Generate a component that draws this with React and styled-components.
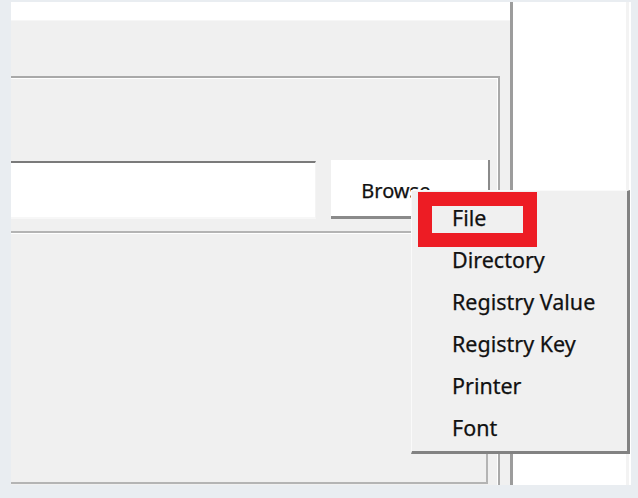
import React from 'react';
import styled, { createGlobalStyle } from 'styled-components';

const GlobalStyle = createGlobalStyle`
    html, body {
        margin: 0;
        padding: 0;
        background: #e9edf1;
    }
    body {
        font-family: "Noto Sans", "Open Sans", sans-serif;
    }
`;

const Page = styled.div`
    position: relative;
    width: 638px;
    height: 498px;
    box-sizing: border-box;
    padding: 2px 6px 13px 11px;
    background: #e9edf1;
    overflow: hidden;
`;

const Window = styled.div`
    display: flex;
    height: 100%;
`;

const LeftPane = styled.div`
    width: 499px;
    display: flex;
    flex-direction: column;
    background: #f0f0f0;
`;

const TopStrip = styled.div`
    height: 18px;
    background: #fff;
    border-bottom: 1px solid #f6f6f6;
`;

const Content = styled.div`
    flex: 1;
    display: flex;
    flex-direction: column;
    padding: 55px 10px 0 0;
`;

const GroupBox = styled.div`
    flex: 1;
    display: flex;
    flex-direction: column;
    border-top: 2px solid #a9a9a9;
    border-right: 2px solid #a9a9a9;
    box-shadow: inset 0 1px 0 #fff, inset -1px 0 0 #fff;
    padding: 83px 8px 0 0;
`;

const FieldRow = styled.div`
    display: flex;
    align-items: flex-start;
    gap: 15px;
`;

const TextInput = styled.div`
    width: 305px;
    height: 54px;
    background: #fff;
    border-top: 2px solid #7a7a7a;
    border-right: 1px solid #f4f4f4;
    border-bottom: 2px solid #f7f7f7;
`;

const Button = styled.div`
    width: 159px;
    height: 59px;
    box-sizing: border-box;
    margin-top: -1px;
    background: #fff;
    border-right: 2px solid #8a8a8a;
    border-bottom: 3px solid #8a8a8a;
    display: flex;
    align-items: center;
    padding: 4px 0 0 30px;
    font-size: 20px;
    color: #111;
    -webkit-text-stroke: 0.25px #111;
`;

const InnerBox = styled.div`
    flex: 1;
    margin: 12px 2px 1px 0;
    border-top: 2px solid #b4b4b4;
    border-right: 2px solid #b4b4b4;
    border-bottom: 2px solid #b4b4b4;
    box-shadow: inset 0 1px 0 #fff;
`;

const Divider = styled.div`
    width: 3px;
    background: #9c9c9c;
`;

const RightPane = styled.div`
    width: 113px;
    background: #fff;
    border-right: 3px solid #f3f3f3;
    box-shadow: 2px 0 0 #fff;
    margin-right: 2px;
`;

const Menu = styled.ul`
    position: absolute;
    left: 411px;
    top: 190px;
    width: 215px;
    margin: 0;
    padding: 6px 0 2px;
    list-style: none;
    background: #f0f0f0;
    border-top: 1px solid #fafafa;
    border-left: 1px solid #fafafa;
    border-right: 3px solid #828282;
    border-bottom: 3px solid #828282;
`;

const MenuItem = styled.li`
    height: 42px;
    line-height: 42px;
    padding-left: 40px;
    font-size: 21.5px;
    color: #111;
    -webkit-text-stroke: 0.25px #111;
    white-space: nowrap;
`;

const Highlight = styled.div`
    position: absolute;
    left: 418px;
    top: 192px;
    width: 91px;
    height: 27px;
    border: 14px solid #ed1c24;
`;

const items = ['File', 'Directory', 'Registry Value', 'Registry Key', 'Printer', 'Font'];

export default function App() {
    return (
        <Page>
            <GlobalStyle />
            <Window>
                <LeftPane>
                    <TopStrip />
                    <Content>
                        <GroupBox>
                            <FieldRow>
                                <TextInput />
                                <Button>Browse</Button>
                            </FieldRow>
                            <InnerBox />
                        </GroupBox>
                    </Content>
                </LeftPane>
                <Divider />
                <RightPane />
            </Window>
            <Menu>
                {items.map(item => (
                    <MenuItem key={item}>{item}</MenuItem>
                ))}
            </Menu>
            <Highlight />
        </Page>
    );
}
